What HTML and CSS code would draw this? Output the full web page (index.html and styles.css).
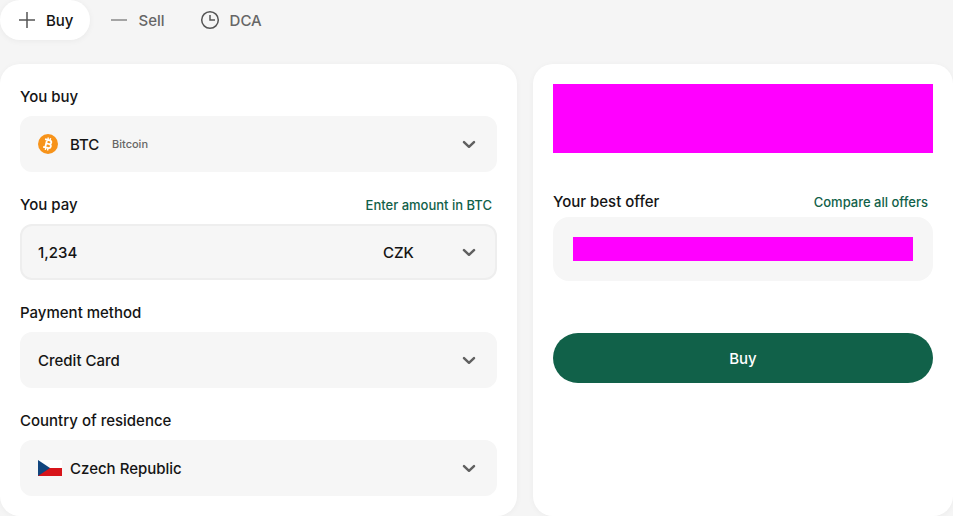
FILE: index.html
```html
<!DOCTYPE html>
<html lang="en">
<head>
<meta charset="utf-8">
<meta name="viewport" content="width=device-width, initial-scale=1">
<title>Buy Bitcoin</title>
<link rel="stylesheet" href="styles.css">
</head>
<body>
<svg width="0" height="0" class="sprite" aria-hidden="true">
  <symbol id="chevron" viewBox="0 0 20 20"><path d="M5 8.2 10 12.8 15 8.2" fill="none" stroke="#606060" stroke-width="2.5" stroke-linecap="round" stroke-linejoin="round"/></symbol>
</svg>
<nav class="tabs" aria-label="Order type">
  <button type="button" class="tab tab-active">
    <svg class="tab-icon" viewBox="0 0 20 20" aria-hidden="true"><path d="M3 10H19M11 2V18"/></svg>Buy
  </button>
  <button type="button" class="tab">
    <svg class="tab-icon tab-icon-light" viewBox="0 0 20 20" aria-hidden="true"><path d="M2 10H18"/></svg>Sell
  </button>
  <button type="button" class="tab">
    <svg class="tab-icon" viewBox="0 0 20 20" aria-hidden="true"><circle cx="10" cy="10" r="8.3"/><path d="M10 5V10H15"/></svg>DCA
  </button>
</nav>
<main class="layout">
  <form class="card form">
    <div class="group">
      <div class="heading"><label for="asset">You buy</label></div>
      <div class="field">
        <svg class="coin" viewBox="0 0 20 20" aria-hidden="true">
          <circle cx="10" cy="10" r="10" fill="#f7931a"/>
          <g transform="rotate(14 10 10)" fill="none" stroke="#fff" stroke-width="1.8">
            <path d="M6 6.1H10.8C13.5 6.1 13.5 9.8 10.8 9.8H8.1M10.8 9.8C14.2 9.8 14.2 13.9 10.8 13.9H6M8.1 6.1V13.9"/>
            <path d="M8.8 3.6V6M11.1 3.6V6M8.8 14V16.4M11.1 14V16.4" stroke-width="1.4"/>
          </g>
        </svg>
        <select id="asset" class="select"><option>BTC</option></select>
        <span class="note">Bitcoin</span>
        <svg class="chevron" aria-hidden="true"><use href="#chevron"/></svg>
      </div>
    </div>
    <div class="group">
      <div class="heading"><label for="amount">You pay</label><a class="link" href="#amount">Enter amount in BTC</a></div>
      <div class="field field-outlined">
        <input id="amount" class="amount" type="text" inputmode="decimal" value="1,234">
        <div class="currency">
          <select class="select" aria-label="Currency"><option>CZK</option></select>
          <svg class="chevron" aria-hidden="true"><use href="#chevron"/></svg>
        </div>
      </div>
    </div>
    <div class="group">
      <div class="heading"><label for="method">Payment method</label></div>
      <div class="field">
        <select id="method" class="select"><option>Credit Card</option></select>
        <svg class="chevron" aria-hidden="true"><use href="#chevron"/></svg>
      </div>
    </div>
    <div class="group">
      <div class="heading"><label for="country">Country of residence</label></div>
      <div class="field">
        <svg class="flag" viewBox="0 0 24 16" aria-hidden="true"><path fill="#fff" d="M0 0H24V8H0Z"/><path fill="#d7141a" d="M0 8H24V16H0Z"/><path fill="#11457e" d="M0 0 12 8 0 16Z"/></svg>
        <select id="country" class="select"><option>Czech Republic</option></select>
        <svg class="chevron" aria-hidden="true"><use href="#chevron"/></svg>
      </div>
    </div>
  </form>
  <section class="card summary">
    <div class="block block-large"></div>
    <div class="heading"><span>Your best offer</span><a class="link" href="#offers">Compare all offers</a></div>
    <div class="offer"><div class="block block-small"></div></div>
    <button type="button" class="submit">Buy</button>
  </section>
</main>
</body>
</html>
```
FILE: styles.css
```css
* {
  box-sizing: border-box;
}

body {
  margin: 0;
  background: #f5f5f5;
  color: #141414;
  font: 500 15px/26px Inter, "Liberation Sans", sans-serif;
}

button,
input,
select {
  font: inherit;
  color: inherit;
}

.sprite {
  position: absolute;
}

.tabs {
  display: flex;
  gap: 3px;
  margin-bottom: 24px;
}

.tab {
  display: flex;
  align-items: center;
  gap: 10px;
  height: 40px;
  padding: 2px 16px 0;
  border: 0;
  border-radius: 20px;
  background: transparent;
  color: #666;
}

.tab-active {
  background: #fff;
  color: #141414;
  box-shadow: 0 1px 6px rgb(0 0 0 / 5%);
}

.tab-icon {
  width: 20px;
  height: 20px;
  margin-bottom: 2px;
  fill: none;
  stroke: #555;
  stroke-width: 1.5;
}

.tab-icon-light {
  stroke: #888;
}

.layout {
  display: grid;
  grid-template-columns: minmax(0, 1fr) 420px;
  gap: 16px;
}

.card {
  padding: 20px;
  border-radius: 20px;
  background: #fff;
  box-shadow: 0 1px 6px rgb(0 0 0 / 4%);
}

.form {
  display: flex;
  flex-direction: column;
  gap: 20px;
}

.group {
  display: flex;
  flex-direction: column;
  gap: 6px;
}

.heading {
  display: flex;
  justify-content: space-between;
  align-items: center;
  padding-right: 5px;
}

.link {
  color: #116149;
  font-size: 13px;
  text-decoration: none;
}

.field {
  display: flex;
  align-items: center;
  gap: 8px;
  height: 56px;
  padding: 0 16px;
  border: 2px solid #f6f6f6;
  border-radius: 12px;
  background: #f6f6f6;
}

.field-outlined {
  border-color: #eee;
}

.select {
  padding: 2px 0 0;
  border: 0;
  background: transparent;
  appearance: none;
}

.note {
  padding-left: 4px;
  color: #666;
  font-size: 11px;
}

.chevron {
  width: 20px;
  height: 20px;
  margin-left: auto;
}

.amount {
  flex: 1;
  min-width: 0;
  padding: 2px 0 0;
  border: 0;
  background: transparent;
}

.currency {
  display: flex;
  align-items: center;
  width: 96px;
}

.coin {
  width: 20px;
  height: 20px;
  margin-right: 4px;
}

.flag {
  width: 24px;
  height: 16px;
}

.block {
  background: #f0f;
}

.block-large {
  height: 69px;
  margin-bottom: 36px;
}

.block-small {
  height: 24px;
}

.offer {
  margin-top: 2px;
  padding: 20px;
  border-radius: 16px;
  background: #f6f6f6;
}

.submit {
  width: 100%;
  height: 50px;
  margin-top: 52px;
  padding: 2px 0 0;
  border: 0;
  border-radius: 25px;
  background: #116149;
  color: #fff;
}
```
